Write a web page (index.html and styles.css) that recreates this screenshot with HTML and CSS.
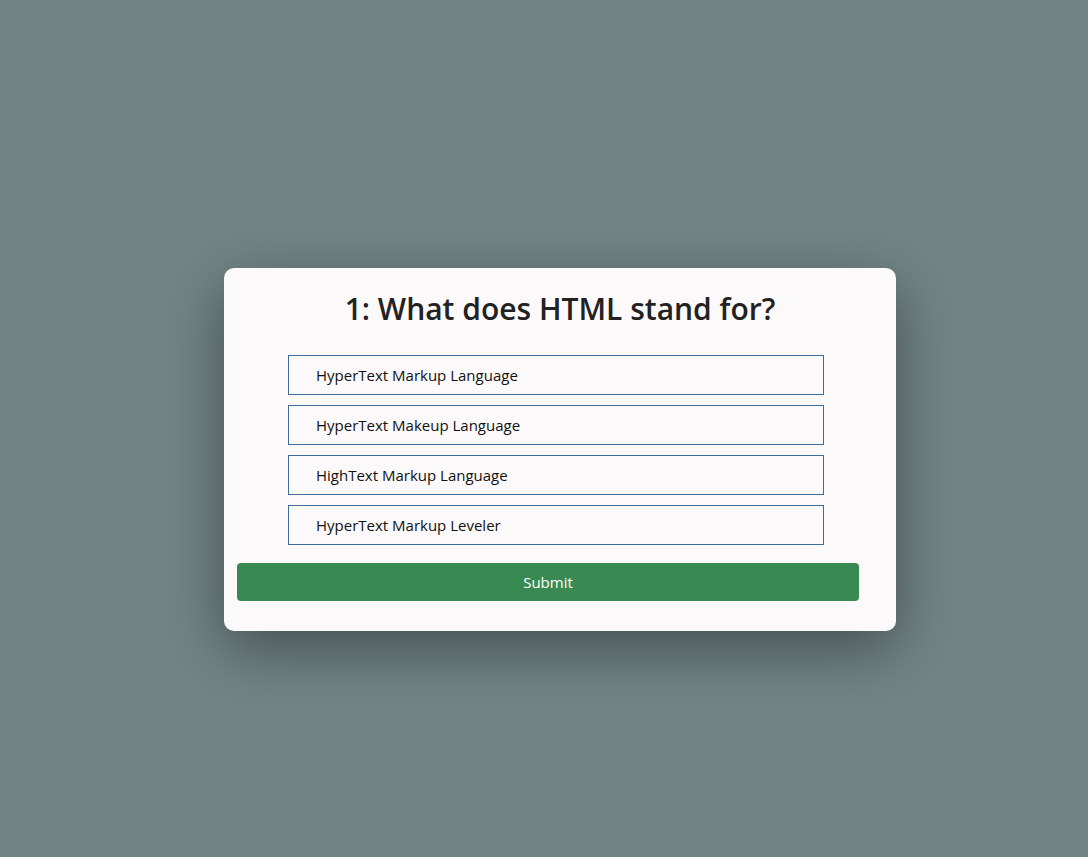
FILE: index.html
```html
<!DOCTYPE html>
<html lang="en">
<head>
<meta charset="UTF-8" />
<meta name="viewport" content="width=device-width, initial-scale=1.0">
<title>Quiz</title>
<link rel="stylesheet" href="styles.css">
</head>
<body>
<div class="quiz">
  <h2 class="question">1: What does HTML stand for?</h2>
  <ul class="answers">
    <li class="answer">HyperText Markup Language</li>
    <li class="answer">HyperText Makeup Language</li>
    <li class="answer">HighText Markup Language</li>
    <li class="answer">HyperText Markup Leveler</li>
  </ul>
  <button class="submit">Submit</button>
</div>
</body>
</html>
```

FILE: styles.css
```css
body {
  margin: 0;
  padding: 268px 0 0 224px;
  min-height: 100vh;
  box-sizing: border-box;
  background-color: #718486;
  font-family: 'Open Sans', sans-serif;
  color: #222;
}

.quiz {
  width: 672px;
  box-sizing: border-box;
  padding: 20px 0 30px;
  background: #fcf9fa;
  border-radius: 10px;
  box-shadow: 0 18px 60px rgba(0, 0, 0, 0.4);
}

.question {
  margin: 0;
  text-align: center;
  font-size: 30px;
  line-height: 42px;
  font-weight: 600;
  color: #222;
}

.answers {
  list-style: none;
  margin: 25px 0 18px 64px;
  padding: 0;
  width: 536px;
}

.answer {
  box-sizing: border-box;
  height: 40px;
  line-height: 38px;
  padding-left: 27px;
  margin-bottom: 10px;
  border: 1px solid #3e6c99;
  font-size: 15px;
  color: #111;
}

.answer:last-child {
  margin-bottom: 0;
}

.submit {
  display: block;
  margin-left: 13px;
  width: 622px;
  height: 38px;
  border: none;
  border-radius: 4px;
  background: #388a52;
  color: #fff;
  font-family: 'Open Sans', sans-serif;
  font-size: 15px;
  cursor: pointer;
}
```
